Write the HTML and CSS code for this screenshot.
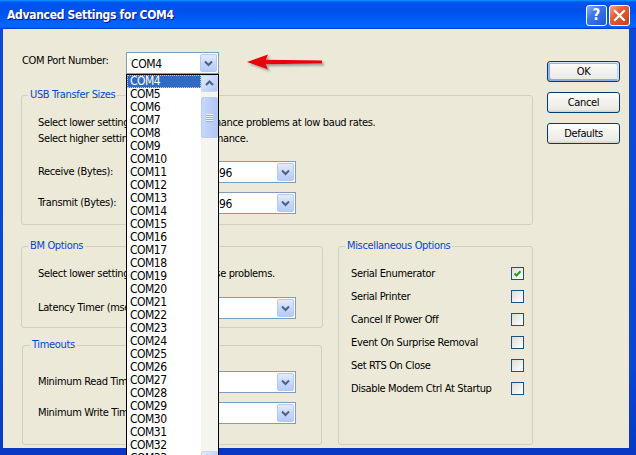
FILE: index.html
```html
<!DOCTYPE html>
<html>
<head>
<meta charset="utf-8">
<title>Advanced Settings for COM4</title>
<link rel="stylesheet" href="styles.css">
</head>
<body>
<div class="window">
  <div class="titlebar">
    <span class="title">Advanced Settings for COM4</span>
    <div class="tb-buttons">
      <div class="tb-btn help">?</div>
      <div class="tb-btn close">
        <svg width="19" height="19" viewBox="0 0 19 19"><path d="M5 5 L14 14 M14 5 L5 14" stroke="#fff" stroke-width="2.2" stroke-linecap="square" fill="none"/></svg>
      </div>
    </div>
  </div>
  <div class="client">
    <div class="main">
      <div class="port-row">
        <span class="port-label">COM Port Number:</span>
        <div class="combo port-combo"><span class="val">COM4</span><span class="drop"><svg width="15" height="18" viewBox="0 0 15 18"><path d="M4 7.5 L7.5 11 L11 7.5" stroke="#4D6185" stroke-width="2" fill="none"/></svg></span></div>
      </div>

      <div class="group usb">
        <span class="legend">USB Transfer Sizes</span>
        <p class="desc first">Select lower settings to correct performance problems at low baud rates.</p>
        <p class="desc">Select higher settings for faster performance.</p>
        <div class="field f-receive"><span class="flabel">Receive (Bytes):</span><div class="combo"><span class="val">4096</span><span class="drop"><svg width="15" height="18" viewBox="0 0 15 18"><path d="M4 7.5 L7.5 11 L11 7.5" stroke="#4D6185" stroke-width="2" fill="none"/></svg></span></div></div>
        <div class="field f-transmit"><span class="flabel">Transmit (Bytes):</span><div class="combo"><span class="val">4096</span><span class="drop"><svg width="15" height="18" viewBox="0 0 15 18"><path d="M4 7.5 L7.5 11 L11 7.5" stroke="#4D6185" stroke-width="2" fill="none"/></svg></span></div></div>
      </div>

      <div class="lower">
        <div class="left-col">
          <div class="group bm">
            <span class="legend">BM Options</span>
            <p class="desc first">Select lower settings to correct response problems.</p>
            <div class="field f-latency"><span class="flabel">Latency Timer (msec):</span><div class="combo"><span class="val">16</span><span class="drop"><svg width="15" height="18" viewBox="0 0 15 18"><path d="M4 7.5 L7.5 11 L11 7.5" stroke="#4D6185" stroke-width="2" fill="none"/></svg></span></div></div>
          </div>
          <div class="group timeouts">
            <span class="legend">Timeouts</span>
            <div class="field f-read"><span class="flabel">Minimum Read Timeout (msec):</span><div class="combo"><span class="val">0</span><span class="drop"><svg width="15" height="18" viewBox="0 0 15 18"><path d="M4 7.5 L7.5 11 L11 7.5" stroke="#4D6185" stroke-width="2" fill="none"/></svg></span></div></div>
            <div class="field f-write"><span class="flabel">Minimum Write Timeout (msec):</span><div class="combo"><span class="val">0</span><span class="drop"><svg width="15" height="18" viewBox="0 0 15 18"><path d="M4 7.5 L7.5 11 L11 7.5" stroke="#4D6185" stroke-width="2" fill="none"/></svg></span></div></div>
          </div>
        </div>
        <div class="group misc">
          <span class="legend">Miscellaneous Options</span>
          <div class="opts">
            <div class="opt"><span>Serial Enumerator</span><span class="check on"><svg width="11" height="11" viewBox="0 0 11 11"><path d="M2.5 5.5 L4.5 7.5 L8.5 3.3" stroke="#21A121" stroke-width="2" fill="none"/></svg></span></div>
            <div class="opt"><span>Serial Printer</span><span class="check"></span></div>
            <div class="opt"><span>Cancel If Power Off</span><span class="check"></span></div>
            <div class="opt"><span>Event On Surprise Removal</span><span class="check"></span></div>
            <div class="opt"><span>Set RTS On Close</span><span class="check"></span></div>
            <div class="opt"><span>Disable Modem Ctrl At Startup</span><span class="check"></span></div>
          </div>
        </div>
      </div>
    </div>

    <div class="side">
      <div class="btn default">OK</div>
      <div class="btn">Cancel</div>
      <div class="btn">Defaults</div>
    </div>
  </div>

  <div class="droplist">
    <div class="items">
      <div class="item sel">COM4</div>
      <div class="item">COM5</div>
      <div class="item">COM6</div>
      <div class="item">COM7</div>
      <div class="item">COM8</div>
      <div class="item">COM9</div>
      <div class="item">COM10</div>
      <div class="item">COM11</div>
      <div class="item">COM12</div>
      <div class="item">COM13</div>
      <div class="item">COM14</div>
      <div class="item">COM15</div>
      <div class="item">COM16</div>
      <div class="item">COM17</div>
      <div class="item">COM18</div>
      <div class="item">COM19</div>
      <div class="item">COM20</div>
      <div class="item">COM21</div>
      <div class="item">COM22</div>
      <div class="item">COM23</div>
      <div class="item">COM24</div>
      <div class="item">COM25</div>
      <div class="item">COM26</div>
      <div class="item">COM27</div>
      <div class="item">COM28</div>
      <div class="item">COM29</div>
      <div class="item">COM30</div>
      <div class="item">COM31</div>
      <div class="item">COM32</div>
      <div class="item">COM33</div>
    </div>
    <div class="sb">
      <div class="sb-btn"><svg width="15" height="15" viewBox="0 0 15 15"><path d="M4 9 L7.5 5.5 L11 9" stroke="#4D6185" stroke-width="2" fill="none"/></svg></div>
      <div class="sb-thumb"><span class="grip"></span></div>
      <div class="sb-track"></div>
      <div class="sb-btn"><svg width="15" height="15" viewBox="0 0 15 15"><path d="M4 6 L7.5 9.5 L11 6" stroke="#4D6185" stroke-width="2" fill="none"/></svg></div>
    </div>
  </div>

  <svg class="red-arrow" width="84" height="26" viewBox="0 0 84 26">
    <defs>
      <filter id="sh" x="-20%" y="-50%" width="140%" height="200%">
        <feDropShadow dx="2" dy="2" stdDeviation="1.2" flood-color="#606060" flood-opacity="0.55"/>
      </filter>
    </defs>
    <g filter="url(#sh)">
      <polygon points="3,12 24,4.5 21,12 24,19.5" fill="#E8000A"/>
      <polygon points="20,9.8 78,10.4 78,13.6 20,14.2" fill="#E8000A"/>
    </g>
  </svg>
</div>
</body>
</html>
```

FILE: styles.css
```css
* { box-sizing: border-box; }

html, body {
  margin: 0;
  padding: 0;
}

body {
  width: 636px;
  height: 455px;
  overflow: hidden;
  background: #0A44D3;
  font-family: "DejaVu Sans Condensed", "DejaVu Sans", sans-serif;
  font-stretch: condensed;
  font-size: 11px;
  letter-spacing: -0.35px;
  color: #000;
}

.window {
  position: relative;
  width: 636px;
  height: 455px;
  display: flex;
  flex-direction: column;
  overflow: hidden;
  background: linear-gradient(180deg, #0B4BDA 0%, #0A45D4 80%, #0838C4 100%);
}

/* ---------- title bar ---------- */
.titlebar {
  height: 29px;
  flex: none;
  display: flex;
  align-items: center;
  padding: 0 6px 0 7px;
  background: linear-gradient(180deg, #0997FF 0, #0053EE 8%, #0050EE 40%, #0066FF 88%, #0066FF 93%, #005BFF 95%, #003DD7 96%, #003DD7 100%);
}

.title {
  color: #fff;
  font-weight: bold;
  font-size: 12px;
  letter-spacing: -0.3px;
  text-shadow: 1px 1px #0F1089;
}

.tb-buttons {
  margin-left: auto;
  display: flex;
  gap: 2px;
  margin-top: 1px;
}

.tb-btn {
  width: 21px;
  height: 21px;
  border: 1px solid #fff;
  border-radius: 3px;
  display: flex;
  align-items: center;
  justify-content: center;
  color: #fff;
  font-family: "DejaVu Sans", sans-serif;
  font-weight: bold;
  font-size: 15px;
  letter-spacing: 0;
}

.tb-btn.help {
  background: linear-gradient(135deg, #88AEF8 0%, #3A74EC 40%, #2158DC 100%);
}

.tb-btn.close {
  background: linear-gradient(135deg, #F4A48B 0%, #E35C38 40%, #C8401B 100%);
}

/* ---------- client ---------- */
.client {
  flex: 1;
  margin: 0 7px 7px 3px;
  background: #ECE9D8;
  display: flex;
  padding-left: 18px;
}

.main {
  width: 512px;
  display: flex;
  flex-direction: column;
}

.port-row {
  display: flex;
  align-items: flex-start;
  margin-top: 23px;
  height: 22px;
}

.port-label {
  width: 105px;
  padding-left: 1px;
  margin-top: 2px;
  line-height: 14px;
}

.port-combo {
  width: 93px;
}

/* combo box */
.combo {
  height: 22px;
  border: 1px solid #7F9DB9;
  background: #fff;
  display: flex;
  align-items: center;
  padding: 1px;
}

.combo .val {
  flex: 1;
  padding-left: 3px;
  font-size: 12px;
  line-height: 14px;
  padding-top: 1px;
}

.combo .drop {
  width: 17px;
  height: 18px;
  border: 1px solid #B5C8F3;
  border-radius: 2px;
  background: linear-gradient(180deg, #E3ECFE 0%, #C9D8FB 50%, #B7CBF7 100%);
  display: flex;
  align-items: center;
  justify-content: center;
}

/* group boxes */
.group {
  border: 1px solid #D0D0BF;
  border-radius: 3px;
  display: flex;
  flex-direction: column;
  padding-left: 16px;
}

.legend {
  align-self: flex-start;
  margin: -8px 0 0 -10px;
  padding: 0 2px;
  background: #ECE9D8;
  color: #0046D5;
  line-height: 14px;
}

.desc {
  margin: 0;
  line-height: 16px;
}

.desc.first {
  margin-top: 13px;
}

.field {
  display: grid;
  grid-template-columns: 163px 95px;
  align-items: center;
}

.flabel {
  line-height: 14px;
  margin-top: -1px;
}

.usb {
  margin-top: 21px;
  height: 130px;
}

.f-receive { margin-top: 14px; }
.f-transmit { margin-top: 9px; }

.lower {
  display: flex;
  margin-top: 21px;
}

.left-col {
  width: 302px;
  display: flex;
  flex-direction: column;
}

.bm {
  height: 82px;
}

.f-latency { margin-top: 15px; }

.timeouts {
  margin: 17px 1px 0 1px;
  height: 100px;
  padding-left: 15px;
}

.timeouts .legend {
  margin-left: -8px;
}

.f-read { margin-top: 19px; }
.f-write { margin-top: 9px; }

.misc {
  margin-left: 15px;
  width: 195px;
  height: 199px;
  padding-left: 12px;
}

.misc .legend {
  margin-left: -6px;
}

.opts {
  margin-top: 9px;
  display: flex;
  flex-direction: column;
}

.opt {
  height: 23px;
  display: grid;
  grid-template-columns: 160px 13px;
  align-items: center;
  line-height: 14px;
}

.check {
  width: 13px;
  height: 13px;
  border: 1px solid #1C5180;
  background: linear-gradient(135deg, #DCDCD7 0%, #F2F2EF 60%, #FFFFFF 100%);
  display: flex;
  align-items: center;
  justify-content: center;
}

/* side buttons */
.side {
  margin-left: 14px;
  padding-top: 32px;
  width: 73px;
  display: flex;
  flex-direction: column;
  gap: 10px;
}

.btn {
  height: 21px;
  border: 1px solid #003C74;
  border-radius: 3px;
  background: linear-gradient(180deg, #FFFFFF 0%, #F4F3EE 40%, #ECEBE6 86%, #D6D0C5 100%);
  display: flex;
  align-items: center;
  justify-content: center;
  line-height: 14px;
}

.btn.default {
  box-shadow: inset -1px 1px #CEE7FF, inset 1px 2px #98B8EA, inset -2px 2px #BCD4F6, inset 1px -1px #89ADE4, inset 2px -2px #89ADE4;
}

/* ---------- dropdown list (overlay) ---------- */
.droplist {
  position: absolute;
  left: 126px;
  top: 74px;
  width: 93px;
  height: 395px;
  border: 1px solid #000;
  background: #fff;
  display: flex;
}

.items {
  width: 74px;
  display: flex;
  flex-direction: column;
}

.item {
  height: 13px;
  line-height: 13px;
  padding-left: 3px;
  font-size: 12px;
  letter-spacing: -0.5px;
  flex: none;
}

.item.sel {
  background: #316AC5;
  color: #fff;
  outline: 1px dotted #C8D7F2;
  outline-offset: -1px;
}

.sb {
  width: 17px;
  display: flex;
  flex-direction: column;
  background: #F5F4EF;
}

.sb-btn {
  height: 17px;
  flex: none;
  border: 1px solid #C6D5FA;
  border-radius: 2px;
  background: linear-gradient(135deg, #E1EAFE 0%, #C6D6FB 55%, #B3C8F6 100%);
  display: flex;
  align-items: center;
  justify-content: center;
}

.sb-thumb {
  margin-top: 5px;
  height: 41px;
  flex: none;
  border: 1px solid #B8CBF5;
  border-radius: 2px;
  background: linear-gradient(90deg, #C9D8FC 0%, #BBCFFA 50%, #B0C6F6 100%);
  display: flex;
  align-items: center;
  justify-content: center;
}

.grip {
  width: 7px;
  height: 8px;
  background: repeating-linear-gradient(180deg, #EEF4FE 0 1px, #8CAEF0 1px 2px);
}

.sb-track {
  flex: 1;
}

/* ---------- red arrow annotation (overlay) ---------- */
.red-arrow {
  position: absolute;
  left: 244px;
  top: 50px;
}
```
